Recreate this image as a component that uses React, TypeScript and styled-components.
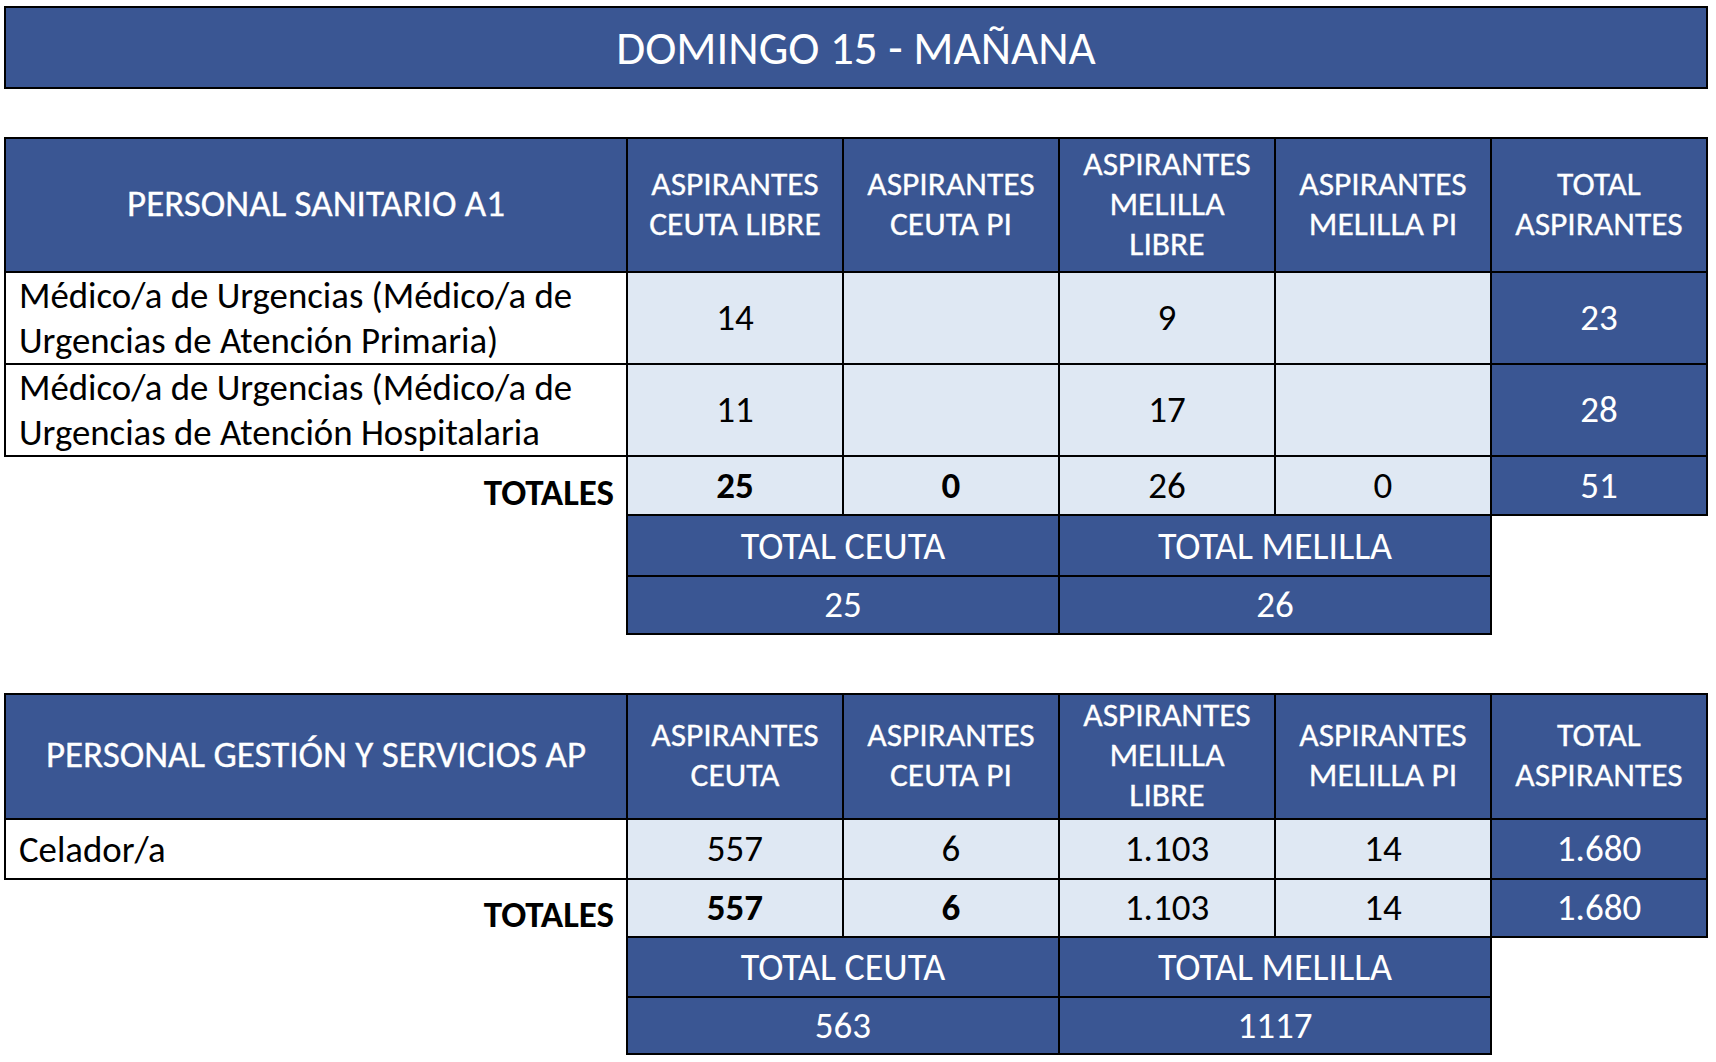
import React from 'react';
import styled, { createGlobalStyle, css } from 'styled-components';

const BLUE = '#3a5693';
const LIGHT = '#dfe8f3';
const LINE = '2px solid #000';

const GlobalStyle = createGlobalStyle`
  body {
    margin: 0;
    background: #fff;
    font-family: Carlito, Lato, "Liberation Sans", sans-serif;
  }
`;

const Page = styled.div`
  padding: 6px 0 0 4px;
  width: 1704px;
`;

const TitleBar = styled.div`
  box-sizing: border-box;
  height: 83px;
  border: ${LINE};
  background: ${BLUE};
  color: #fff;
  font-size: 47px;
  display: flex;
  align-items: center;
  justify-content: center;
`;

const Table = styled.table<{ $top: number }>`
  border-collapse: collapse;
  table-layout: fixed;
  width: 1704px;
  margin-top: ${(p) => p.$top}px;
  font-size: 37px;
  line-height: 44px;
`;

const Row = styled.tr<{ $h: number }>`
  height: ${(p) => p.$h}px;
`;

const HeadCell = styled.th<{ $wide?: boolean }>`
  border: ${LINE};
  background: ${BLUE};
  color: #fff;
  font-weight: 400;
  text-align: center;
  vertical-align: middle;
  padding: 0 4px 3px;
  font-size: ${(p) => (p.$wide ? 37 : 33.5)}px;
  line-height: ${(p) => (p.$wide ? 44 : 40)}px;
  -webkit-text-stroke: 0.3px #fff;
`;

const NameCell = styled.td`
  border: ${LINE};
  background: #fff;
  color: #000;
  text-align: left;
  vertical-align: middle;
  padding: 0 0 0 13px;
  font-size: 36.8px;
  line-height: 45px;
  white-space: nowrap;
`;

const TotalsLabel = styled.td`
  border: none;
  text-align: right;
  vertical-align: bottom;
  font-weight: 700;
  padding: 0 12px 0 0;
`;

const Blank = styled.td`
  border: none;
  padding: 0;
`;

const NumCell = styled.td<{ $bold?: boolean }>`
  border: ${LINE};
  background: ${LIGHT};
  color: #000;
  text-align: center;
  vertical-align: middle;
  padding: 0;
  ${(p) =>
    p.$bold &&
    css`
      font-weight: 700;
    `}
`;

const BlueCell = styled.td<{ $big?: boolean }>`
  border: ${LINE};
  background: ${BLUE};
  color: #fff;
  text-align: center;
  vertical-align: middle;
  padding: 0;
  font-size: ${(p) => (p.$big ? 38 : 37)}px;
`;

type Value = { v: string; bold?: boolean };

type Section = {
  title: string;
  heads: string[][];
  rows: { name: string[]; values: string[]; total: string }[];
  totals: Value[];
  grand: string;
  ceuta: string;
  melilla: string;
  heights: number[];
  top: number;
};

const sections: Section[] = [
  {
    title: 'PERSONAL SANITARIO A1',
    heads: [
      ['ASPIRANTES', 'CEUTA LIBRE'],
      ['ASPIRANTES', 'CEUTA PI'],
      ['ASPIRANTES', 'MELILLA', 'LIBRE'],
      ['ASPIRANTES', 'MELILLA PI'],
      ['TOTAL', 'ASPIRANTES'],
    ],
    rows: [
      {
        name: ['Médico/a de Urgencias (Médico/a de', 'Urgencias de Atención Primaria)'],
        values: ['14', '', '9', ''],
        total: '23',
      },
      {
        name: ['Médico/a de Urgencias (Médico/a de', 'Urgencias de Atención Hospitalaria'],
        values: ['11', '', '17', ''],
        total: '28',
      },
    ],
    totals: [{ v: '25', bold: true }, { v: '0', bold: true }, { v: '26' }, { v: '0' }],
    grand: '51',
    ceuta: '25',
    melilla: '26',
    heights: [134, 92, 92, 59, 61, 58],
    top: 48,
  },
  {
    title: 'PERSONAL GESTIÓN Y SERVICIOS AP',
    heads: [
      ['ASPIRANTES', 'CEUTA'],
      ['ASPIRANTES', 'CEUTA PI'],
      ['ASPIRANTES', 'MELILLA', 'LIBRE'],
      ['ASPIRANTES', 'MELILLA PI'],
      ['TOTAL', 'ASPIRANTES'],
    ],
    rows: [{ name: ['Celador/a'], values: ['557', '6', '1.103', '14'], total: '1.680' }],
    totals: [{ v: '557', bold: true }, { v: '6', bold: true }, { v: '1.103' }, { v: '14' }],
    grand: '1.680',
    ceuta: '563',
    melilla: '1117',
    heights: [125, 60, 58, 60, 57],
    top: 58,
  },
];

function Lines({ lines }: { lines: string[] }) {
  return (
    <>
      {lines.map((l, i) => (
        <React.Fragment key={i}>
          {i > 0 && <br />}
          {l}
        </React.Fragment>
      ))}
    </>
  );
}

function SectionTable({ s }: { s: Section }) {
  const h = s.heights;
  const n = s.rows.length;
  return (
    <Table $top={s.top}>
      <colgroup>
        <col style={{ width: 622 }} />
        <col style={{ width: 216 }} />
        <col style={{ width: 216 }} />
        <col style={{ width: 216 }} />
        <col style={{ width: 216 }} />
        <col style={{ width: 216 }} />
      </colgroup>
      <tbody>
        <Row $h={h[0]}>
          <HeadCell $wide>{s.title}</HeadCell>
          {s.heads.map((hd, i) => (
            <HeadCell key={i}>
              <Lines lines={hd} />
            </HeadCell>
          ))}
        </Row>
        {s.rows.map((r, i) => (
          <Row key={i} $h={h[1 + i]}>
            <NameCell>
              <Lines lines={r.name} />
            </NameCell>
            {r.values.map((v, j) => (
              <NumCell key={j}>{v}</NumCell>
            ))}
            <BlueCell>{r.total}</BlueCell>
          </Row>
        ))}
        <Row $h={h[1 + n]}>
          <TotalsLabel>TOTALES</TotalsLabel>
          {s.totals.map((t, j) => (
            <NumCell key={j} $bold={t.bold}>
              {t.v}
            </NumCell>
          ))}
          <BlueCell>{s.grand}</BlueCell>
        </Row>
        <Row $h={h[2 + n]}>
          <Blank />
          <BlueCell $big colSpan={2}>TOTAL CEUTA</BlueCell>
          <BlueCell $big colSpan={2}>TOTAL MELILLA</BlueCell>
          <Blank />
        </Row>
        <Row $h={h[3 + n]}>
          <Blank />
          <BlueCell colSpan={2}>{s.ceuta}</BlueCell>
          <BlueCell colSpan={2}>{s.melilla}</BlueCell>
          <Blank />
        </Row>
      </tbody>
    </Table>
  );
}

export default function App() {
  return (
    <>
      <GlobalStyle />
      <Page>
        <TitleBar>DOMINGO 15 - MAÑANA</TitleBar>
        {sections.map((s) => (
          <SectionTable key={s.title} s={s} />
        ))}
      </Page>
    </>
  );
}
